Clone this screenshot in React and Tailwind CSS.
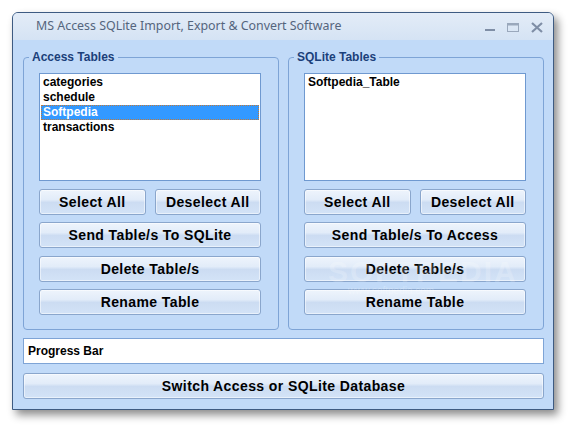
const accessTables = ['categories', 'schedule', 'Softpedia', 'transactions']
const sqliteTables = ['Softpedia_Table']

const btn =
  'h-[26px] rounded-[3px] border border-[#8aa6cc] bg-[linear-gradient(to_bottom,#eef4fc_0%,#e2ecf9_40%,#ccdcf2_52%,#d3e3f7_100%)] text-[14px] font-bold tracking-[0.4px] text-black leading-none shadow-[inset_0_0_0_1px_rgba(255,255,255,0.5)]'

function ListBox({ items, selected }) {
  return (
    <div className="h-[108px] border border-[#6f99d0] bg-white pt-[1px]">
      {items.map((t) => (
        <div
          key={t}
          className={`mx-[1px] h-[15px] pl-[2px] text-[12px] font-bold leading-[15px] ${
            t === selected ? 'bg-[#3399ff] text-white outline outline-1 outline-dotted outline-[#c07a3a] -outline-offset-1' : 'text-black'
          }`}
        >
          {t}
        </div>
      ))}
    </div>
  )
}

function Group({ title, items, selected, sendLabel }) {
  return (
    <div className="relative h-[273px] w-[256px] shrink-0 rounded-[4px] border border-[#7ea4d6] pl-[15px] pr-[17px] pt-[15px]">
      <span className="absolute -top-[8px] left-[5px] bg-[#c1daf8] px-[3px] text-[12px] font-bold leading-[14px] text-[#1b3f7a]">
        {title}
      </span>
      <ListBox items={items} selected={selected} />
      <div className="mt-[8px] grid grid-cols-2 gap-[9px]">
        <button className={btn}>Select All</button>
        <button className={btn}>Deselect All</button>
      </div>
      <button className={`${btn} mt-[7px] w-full`}>{sendLabel}</button>
      <button className={`${btn} mt-[8px] w-full`}>Delete Table/s</button>
      <button className={`${btn} mt-[7px] w-full`}>Rename Table</button>
    </div>
  )
}

export default function App() {
  return (
    <div className="h-[430px] w-[574px] bg-white pl-[12px] pt-[12px] font-['Liberation_Sans',Arial,sans-serif]">
      <div className="flex h-[398px] w-[542px] flex-col overflow-hidden rounded-t-[6px] border border-[#3e5b82] bg-[#c1daf8] shadow-[4px_5px_9px_rgba(0,0,0,0.45)]">
        <div className="flex h-[27px] shrink-0 items-center bg-[linear-gradient(to_bottom,#e3ecf7,#d5e3f4)] pl-[23px] pr-[10px]">
          <span className="font-['Noto_Sans',sans-serif] text-[12.4px] text-[#55657d]">
            MS Access SQLite Import, Export &amp; Convert Software
          </span>
          <div className="ml-auto flex items-center gap-[12px] pt-[2px]">
            <svg width="10" height="10" viewBox="0 0 10 10">
              <rect x="0" y="6" width="10" height="2" fill="#7f8ea6" />
            </svg>
            <svg width="12" height="10" viewBox="0 0 12 10">
              <rect x="0.5" y="0.5" width="11" height="8" fill="none" stroke="#9aa8bc" />
              <rect x="0.5" y="0.5" width="11" height="2" fill="#9aa8bc" />
            </svg>
            <svg width="12" height="11" viewBox="0 0 12 11">
              <path d="M1 1 L11 10 M11 1 L1 10" stroke="#7f8ea6" strokeWidth="2.2" />
            </svg>
          </div>
        </div>
        <div className="flex flex-1 flex-col pl-[10px] pr-[9px] pt-[17px]">
          <div className="flex gap-[9px]">
            <Group title="Access Tables" items={accessTables} selected="Softpedia" sendLabel="Send Table/s To SQLite" />
            <div className="relative">
              <Group title="SQLite Tables" items={sqliteTables} sendLabel="Send Table/s To Access" />
              <div className="pointer-events-none absolute left-[40px] top-[192px] text-[30px] font-bold tracking-[2px] text-white/20">
                SOFTPEDIA
              </div>
              <div className="pointer-events-none absolute left-[60px] top-[226px] text-[10px] text-white/25">
                www.softpedia.com
              </div>
            </div>
          </div>
          <div className="mt-[8px] flex h-[26px] items-center border border-[#7ea4d6] bg-white pl-[4px] text-[12px] font-bold text-black">
            Progress Bar
          </div>
          <button className={`${btn} mt-[9px] w-full`}>Switch Access or SQLite Database</button>
        </div>
      </div>
    </div>
  )
}
